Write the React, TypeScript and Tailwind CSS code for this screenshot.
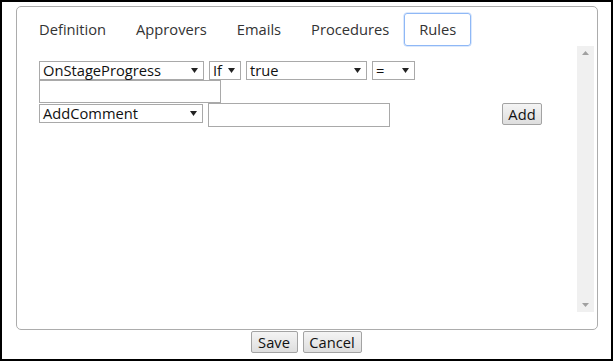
import React from "react";

const font = { fontFamily: '"Open Sans", "Noto Sans", sans-serif' };

function Caret() {
  return (
    <svg width="7" height="5" viewBox="0 0 7 5" className="shrink-0">
      <path d="M0 0 L7 0 L3.5 5 Z" fill="#222" />
    </svg>
  );
}

function FakeSelect({ label, w }: { label: string; w: string }) {
  return (
    <div
      className={`${w} h-[19px] border border-[#a9a9a9] bg-white flex items-center justify-between pl-[3px] pr-[5px] text-[14.7px] leading-[17px] text-[#111] whitespace-nowrap`}
    >
      <span>{label}</span>
      <Caret />
    </div>
  );
}

function Btn({ label, w }: { label: string; w: string }) {
  return (
    <div
      className={`${w} h-[22px] border border-[#a3a3a3] rounded-[2px] bg-gradient-to-b from-[#f4f4f4] to-[#dedede] flex items-center justify-center text-[14.7px] leading-[17px] text-[#111]`}
    >
      {label}
    </div>
  );
}

export default function App() {
  const tabs = ["Definition", "Approvers", "Emails", "Procedures", "Rules"];
  return (
    <div
      style={font}
      className="w-[613px] h-[361px] border-2 border-black bg-white flex flex-col items-start"
    >
      <div className="ml-[14px] mt-[4px] w-[582px] h-[324px] border border-[#acacac] rounded-[5px] flex flex-col">
        <div className="flex pl-[7px] pt-[6px] h-[39px]">
          {tabs.map((t) => (
            <div
              key={t}
              className={`h-[33px] px-[14px] flex items-center text-[14.7px] text-[#333] rounded-[3px] border ${
                t === "Rules" ? "border-[#8fb8f6] shadow-[0_0_0_0.5px_#b9d3fa]" : "border-transparent"
              }`}
            >
              {t}
            </div>
          ))}
        </div>
        <div className="flex flex-1 min-h-0 pr-[3px] pb-[17px]">
          <div className="flex-1 pl-[22px] pt-[15px] flex flex-col">
            <div className="flex gap-[5px]">
              <FakeSelect label="OnStageProgress" w="w-[165px]" />
              <FakeSelect label="If" w="w-[32px]" />
              <FakeSelect label="true" w="w-[121px]" />
              <FakeSelect label="=" w="w-[43px]" />
            </div>
            <div className="w-[182px] h-[23px] border border-[#a9a9a9] bg-white" />
            <div className="flex items-start gap-[5px]">
              <div className="mt-[1px]">
                <FakeSelect label="AddComment" w="w-[164px]" />
              </div>
              <div className="w-[182px] h-[24px] border border-[#a9a9a9] bg-white" />
              <div className="ml-[107px]">
                <Btn label="Add" w="w-[40px]" />
              </div>
            </div>
          </div>
          <div className="w-[17px] bg-[#f0f0f0] flex flex-col justify-between items-center py-[5px]">
            <svg width="7" height="4" viewBox="0 0 7 4">
              <path d="M0 4 L7 4 L3.5 0 Z" fill="#a0a0a0" />
            </svg>
            <svg width="7" height="4" viewBox="0 0 7 4">
              <path d="M0 0 L7 0 L3.5 4 Z" fill="#a0a0a0" />
            </svg>
          </div>
        </div>
      </div>
      <div className="w-full flex justify-center gap-[5px] mt-[1px] pr-[1px]">
        <Btn label="Save" w="w-[47px]" />
        <Btn label="Cancel" w="w-[59px]" />
      </div>
    </div>
  );
}
